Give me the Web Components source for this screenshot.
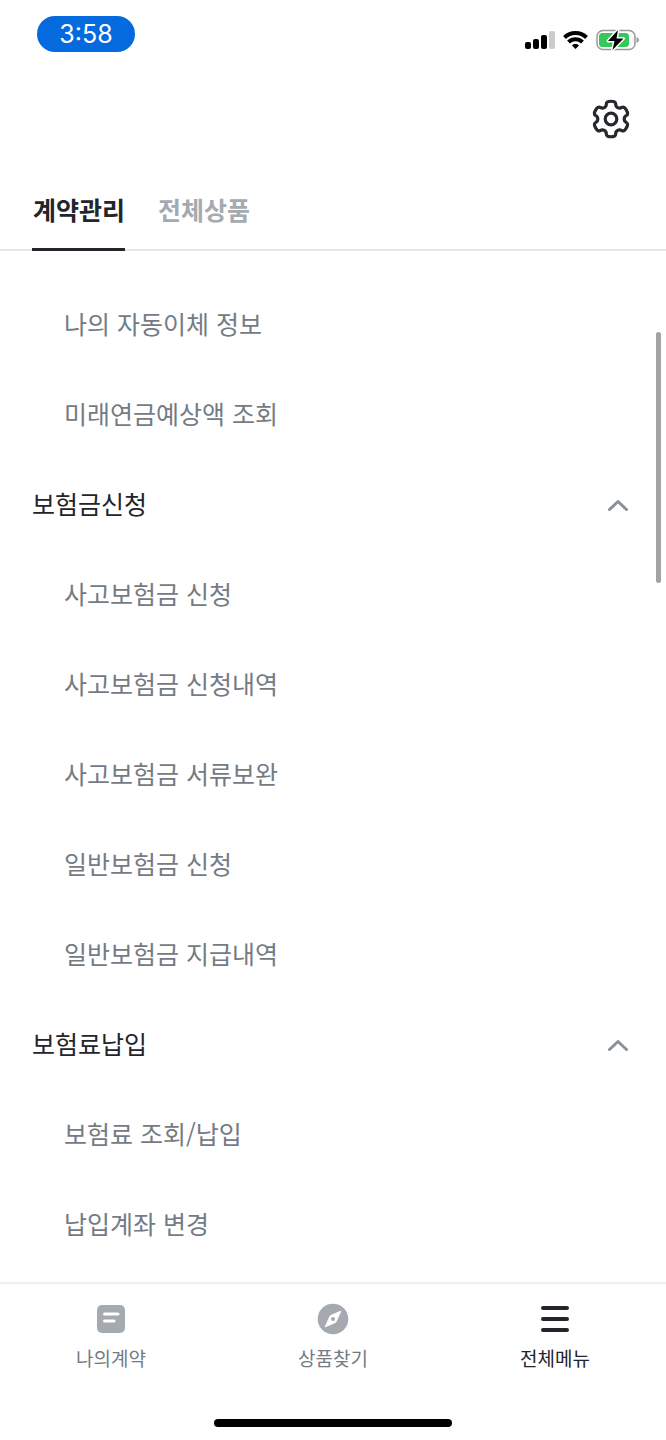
<!DOCTYPE html>
<html lang="ko">
<head>
<meta charset="utf-8">
<meta name="viewport" content="width=device-width, initial-scale=1">
<title>전체메뉴</title>
<style>
  body { margin: 0; background: #fff; }
</style>
</head>
<body>
<insurance-app></insurance-app>
<script>
  const define = (name, html, setup) => {
    const template = document.createElement('template');
    template.innerHTML = html;
    customElements.define(name, class extends HTMLElement {
      connectedCallback() {
        if (this.shadowRoot) return;
        this.attachShadow({ mode: 'open' }).append(template.content.cloneNode(true));
        if (setup) setup(this, this.shadowRoot);
      }
    });
  };

  // Closed outline of a six-toothed cog, rounded by joining edge midpoints.
  const cogPath = (cx, cy) => {
    const pts = [];
    for (let k = 0; k < 6; k++) {
      for (const [a, r] of [[-20, 13.4], [-15, 18.4], [15, 18.4], [20, 13.4]]) {
        const t = (k * 60 + a) * Math.PI / 180;
        pts.push([cx + r * Math.sin(t), cy - r * Math.cos(t)]);
      }
    }
    const mid = (p, q) => [(p[0] + q[0]) / 2, (p[1] + q[1]) / 2];
    const f = p => p.map(n => n.toFixed(2)).join(' ');
    let d = 'M' + f(mid(pts[pts.length - 1], pts[0]));
    pts.forEach((p, i) => { d += 'Q' + f(p) + ' ' + f(mid(p, pts[(i + 1) % pts.length])); });
    return d + 'Z';
  };

  define('status-bar', `
    <style>
      :host { display: flex; justify-content: space-between; align-items: flex-start; padding: 16px 26px 0 37px; height: 54px; box-sizing: border-box; }
      .time { width: 98px; height: 36px; border-radius: 18px; background: #056ade; color: #fff; font: 25px/37px Inter, sans-serif; text-align: center; }
      svg { display: block; margin-top: 10px; }
    </style>
    <div class="time">3:58</div>
    <svg width="116" height="28" viewBox="0 0 116 28" aria-hidden="true">
      <rect x="1" y="16" width="6" height="7" rx="2"/>
      <rect x="9" y="13" width="6" height="10" rx="2"/>
      <rect x="17" y="9" width="6" height="14" rx="2"/>
      <rect x="25" y="5" width="6" height="18" rx="2" fill="#ccc"/>
      <g fill="none" stroke="#000" stroke-width="4">
        <path d="M40.500 11.500C46.500 5.500 56.500 5.500 62.500 11.500"/>
        <path d="M44.500 16C48.500 12.200 54.500 12.200 58.500 16"/>
      </g>
      <path d="M48 19.500C50 17.600 53 17.600 55 19.500L51.500 23Z"/>
      <rect x="73" y="4.500" width="38" height="19" rx="6" fill="#fff" stroke="#999" stroke-width="1.500"/>
      <rect x="75" y="7" width="30" height="14" rx="3.500" fill="#34c759"/>
      <path d="M112.500 11Q115 12 115 14Q115 16 112.500 17Z" fill="#999"/>
      <path d="M94 4L84 15H90.500L88.500 24L99.500 12.500H92.500Z" stroke="#fff" stroke-width="3" stroke-linejoin="round"/>
      <path d="M94 4L84 15H90.500L88.500 24L99.500 12.500H92.500Z"/>
    </svg>`);

  define('app-header', `
    <style>
      :host { display: flex; justify-content: flex-end; padding: 44px 34px 0; height: 116px; box-sizing: border-box; }
      button { width: 42px; height: 42px; padding: 0; border: 0; background: none; }
      svg { display: block; }
    </style>
    <button type="button" aria-label="설정">
      <svg width="42" height="42" viewBox="0 0 42 42" fill="none" stroke="#25282d" stroke-width="3.200">
        <path id="cog"/><circle cx="21" cy="21" r="5.800"/>
      </svg>
    </button>`, (host, root) => root.getElementById('cog').setAttribute('d', cogPath(21, 21)));

  define('tab-bar', `
    <style>
      :host { display: flex; gap: 32px; padding: 0 32px; height: 81px; box-sizing: border-box; border-bottom: 2px solid #e6e7e9; }
    </style>
    <slot></slot>`, host => host.setAttribute('role', 'tablist'));

  define('tab-item', `
    <style>
      :host { display: block; }
      button { display: block; height: 81px; box-sizing: border-box; margin: 0; padding: 0 0 1px 1px; border: 0; border-bottom: 3px solid transparent; background: none; color: #a5aab0; font: inherit; font-weight: 700; white-space: nowrap; }
      :host([selected]) button { color: #22252a; border-color: #22252a; }
    </style>
    <button type="button" role="tab"><slot></slot></button>`,
    (host, root) => root.querySelector('button').setAttribute('aria-selected', host.hasAttribute('selected')));

  define('menu-section', `
    <style>
      :host { display: block; }
      button { display: flex; width: 100%; height: 90px; box-sizing: border-box; align-items: center; justify-content: space-between; margin: 0; padding: 0 36px 2px 32px; border: 0; background: none; color: #22252a; font: inherit; text-align: left; }
      svg { display: block; }
      :host(:not([heading])) button { display: none; }
    </style>
    <button type="button" aria-expanded="true">
      <span></span>
      <svg width="24" height="16" viewBox="0 0 24 16" fill="none" stroke="#8a9097" stroke-width="3" stroke-linecap="round" stroke-linejoin="round"><path d="M3.500 14.500L12 6.500L20.500 14.500"/></svg>
    </button>
    <slot></slot>`,
    (host, root) => {
      root.querySelector('span').textContent = host.getAttribute('heading') || '';
      root.querySelector('button').onclick = e => {
        const open = e.currentTarget.getAttribute('aria-expanded') === 'true';
        e.currentTarget.setAttribute('aria-expanded', !open);
        root.querySelector('slot').hidden = open;
      };
    });

  define('menu-link', `
    <style>
      :host { display: block; }
      a { display: flex; align-items: center; height: 90px; box-sizing: border-box; padding: 0 64px 2px; color: #747b84; text-decoration: none; }
    </style>
    <a href="#"><slot></slot></a>`);

  define('menu-list', `
    <style>
      :host { display: block; position: relative; flex: 1; padding: 28px 0 12px; }
      .thumb { position: absolute; right: 5px; top: 81px; width: 5px; height: 251px; border-radius: 3px; background: #a3a3a3; }
    </style>
    <slot></slot>
    <div class="thumb"></div>`);

  define('bottom-nav', `
    <style>
      :host { display: grid; grid-template-columns: repeat(3, 1fr); border-top: 2px solid #eeeff0; padding-top: 18px; }
    </style>
    <slot></slot>`, host => host.setAttribute('role', 'navigation'));

  define('nav-link', `
    <style>
      :host { display: block; }
      a { display: flex; flex-direction: column; align-items: center; gap: 8px; color: #747b84; font-size: 19px; line-height: 28px; text-decoration: none; }
      :host([selected]) a { color: #22252a; }
    </style>
    <a href="#"><slot name="icon"></slot><slot></slot></a>`);

  define('home-indicator', `
    <style>
      :host { display: flex; justify-content: center; padding: 47px 0 13px; }
      div { width: 238px; height: 8px; border-radius: 4px; background: #000; }
    </style>
    <div></div>`);

  define('insurance-app', `
    <style>
      :host { display: flex; flex-direction: column; min-height: 100vh; background: #fff; font: 25px/36px "Noto Sans CJK KR", sans-serif; }
      .icon { display: block; }
    </style>
    <status-bar></status-bar>
    <app-header></app-header>
    <tab-bar>
      <tab-item selected>계약관리</tab-item>
      <tab-item>전체상품</tab-item>
    </tab-bar>
    <menu-list>
      <menu-section>
        <menu-link>나의 자동이체 정보</menu-link>
        <menu-link>미래연금예상액 조회</menu-link>
      </menu-section>
      <menu-section heading="보험금신청">
        <menu-link>사고보험금 신청</menu-link>
        <menu-link>사고보험금 신청내역</menu-link>
        <menu-link>사고보험금 서류보완</menu-link>
        <menu-link>일반보험금 신청</menu-link>
        <menu-link>일반보험금 지급내역</menu-link>
      </menu-section>
      <menu-section heading="보험료납입">
        <menu-link>보험료 조회/납입</menu-link>
        <menu-link>납입계좌 변경</menu-link>
      </menu-section>
    </menu-list>
    <bottom-nav>
      <nav-link>
        <svg class="icon" slot="icon" width="34" height="34" viewBox="0 0 34 34"><rect x="3" y="3" width="28" height="28" rx="5" fill="#a5aab0"/><path d="M10.500 12H24M10.500 19H20" stroke="#fff" stroke-width="3" stroke-linecap="round"/></svg>
        나의계약
      </nav-link>
      <nav-link>
        <svg class="icon" slot="icon" width="34" height="34" viewBox="0 0 34 34"><circle cx="17" cy="17" r="15.300" fill="#a5aab0"/><path d="M24.800 9.200L20.300 19.200Q19.800 20.200 18.800 20.700L9.200 24.800L13.700 14.800Q14.200 13.800 15.200 13.300Z" fill="#fff" stroke="#fff" stroke-linejoin="round"/><circle cx="17" cy="17" r="2" fill="#a5aab0"/></svg>
        상품찾기
      </nav-link>
      <nav-link selected>
        <svg class="icon" slot="icon" width="34" height="34" viewBox="0 0 34 34"><path d="M5 6H29M5 17H29M5 28H29" stroke="#22252a" stroke-width="4" stroke-linecap="round"/></svg>
        전체메뉴
      </nav-link>
    </bottom-nav>
    <home-indicator></home-indicator>`);
</script>
</body>
</html>
